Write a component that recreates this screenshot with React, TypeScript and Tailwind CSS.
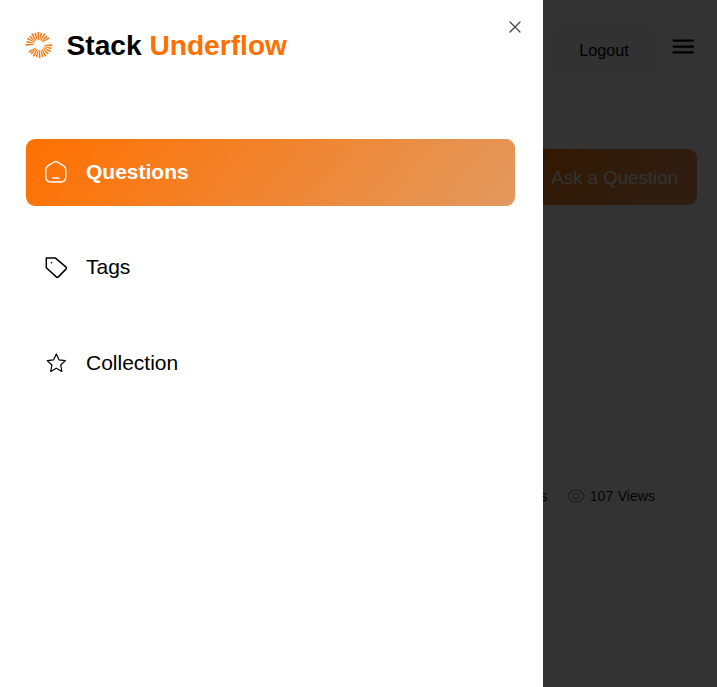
import React from "react";

const FAN_ANGLES = [0, 15, 30, 45, 60, 75, 90, 105, 120, 135, 148];

function Fan() {
  return (
    <>
      {FAN_ANGLES.map((angle, i) => (
        <path
          key={angle}
          transform={`translate(0.6 0.3) rotate(${angle})`}
          d={i % 2 ? "M5 -0.4 L11.8 -1 Q12.6 -0.1 11.9 0.9 L5 0.4Z" : "M4.6 -0.4 L12.4 -1 Q13.300 -0.1 12.5 0.9 L4.6 0.4Z"}
        />
      ))}
    </>
  );
}

function Logo() {
  return (
    <svg className="h-[28px] w-[28px] shrink-0" viewBox="-14 -14 28 28" fill="#f57a18">
      <Fan />
      <g transform="rotate(180)">
        <Fan />
      </g>
    </svg>
  );
}

function HomeIcon() {
  return (
    <svg className="h-6 w-6 shrink-0" viewBox="0 0 24 24" fill="none" stroke="currentColor" strokeWidth="1.400" strokeLinecap="round" strokeLinejoin="round">
      <path d="M10.1 2 3.900 5.800Q1.800 7.200 1.800 9.600V16.800Q1.800 22 7 22H16.600Q21.800 22 21.800 16.800V9.600Q21.800 7.200 19.700 5.800L13.500 2Q11.800 1.100 10.100 2Z" />
      <path d="M8.900 18h6" />
    </svg>
  );
}

function TagIcon() {
  return (
    <svg className="h-6 w-6 shrink-0" viewBox="0 0 24 24" fill="none" stroke="currentColor" strokeWidth="1.500" strokeLinejoin="round" strokeLinecap="round">
      <path d="M2.300 2.100H11.500L22 11.100Q22.900 12.100 22 13.100L14.300 20.900Q13.300 21.800 12.300 20.900L2.300 11.700Z" />
      <circle cx="7.500" cy="6.800" r="0.75" fill="currentColor" stroke="none" />
    </svg>
  );
}

function StarIcon() {
  return (
    <svg className="h-6 w-6 shrink-0" viewBox="0 0 24 24" fill="none" stroke="currentColor" strokeWidth="1.200" strokeLinejoin="round">
      <path d="m12.300 2.900 2.700 5.900 6.400.8-4.700 4.400 1.200 6.500-5.600-3.200-5.600 3.200 1.200-6.500-4.700-4.400 6.400-.8Z" />
    </svg>
  );
}

function EyeIcon() {
  return (
    <svg className="h-[18px] w-[18px] shrink-0" viewBox="0 0 18 18" fill="none" stroke="#858ead" strokeWidth="1.1">
      <path d="M.8 9C2.500 5.300 5.300 3.100 9 3.100S15.500 5.300 17.200 9C15.500 12.700 12.700 14.900 9 14.900S2.500 12.700.8 9Z" />
      <circle cx="9" cy="9" r="2.800" />
    </svg>
  );
}

function Backdrop() {
  return (
    <div className="flex h-full flex-col">
      <header className="flex h-[108px] shrink-0 items-start justify-end bg-[#fefefe] pr-[23px]">
        <div className="mt-[27px] flex h-[46px] w-[106px] items-center justify-center rounded-lg bg-[#f7f8fa] pl-0.5 text-[16.2px]">Logout</div>
        <svg className="mt-[38px] ml-4 h-4 w-[22px]" viewBox="0 0 22 16" stroke="#000" strokeWidth="2.100" strokeLinecap="round">
          <path d="M1.500 2.600h19.500M1.500 8.600h19.500M1.500 14.400h19.500" />
        </svg>
      </header>
      <main className="flex flex-1 flex-col px-5 pt-[41px]">
        <div className="flex h-14 w-[206px] shrink-0 items-center justify-end self-end rounded-[9px] bg-linear-[129deg] from-[#ff7000] to-[#e2995f] pt-0.5 pr-[19px] text-[18.700px] text-[#fffaf5]">
          Ask a Question
        </div>
        <article className="mt-[125px] flex h-[220px] shrink-0 flex-col justify-end rounded-xl bg-[#fefefe] pr-[42px] pb-[43px]">
          <div className="flex h-[22px] items-center justify-end text-[14.100px] text-[#151821]">
            <span className="pt-0.5">Answers</span>
            <span className="ml-[19.500px] flex items-center gap-[5px]">
              <EyeIcon />
              <span className="pt-0.5 [word-spacing:0.5px]">107 Views</span>
            </span>
          </div>
        </article>
        <article className="mt-[35px] h-[220px] shrink-0 rounded-xl bg-[#fefefe]" />
      </main>
    </div>
  );
}

const ITEM = "flex h-[67.5px] items-center gap-[18px] rounded-[9px] pl-[18.5px] text-[21px] ";

export default function App() {
  return (
    <div className="relative h-[687px] w-full overflow-hidden bg-[#fdfdfd] font-['Liberation_Sans',Arial,sans-serif] text-black">
      <Backdrop />
      <div className="absolute inset-0 bg-black/80" />
      <aside className="absolute inset-y-0 left-0 flex w-[543px] flex-col bg-white pr-[28px] pl-[25.5px]">
        <div className="mt-[31px] -ml-[0.5px] flex h-7 items-center gap-[13.500px]">
          <Logo />
          <div className="pt-0.5 text-[28.150px] leading-7 font-bold whitespace-nowrap">
            Stack <span className="text-[#ff7000]">Underflow</span>
          </div>
        </div>
        <nav className="mt-[79.500px] flex flex-col gap-7">
          <a className={ITEM + "bg-linear-[129deg] from-[#ff7000] to-[#e2995f] font-bold text-white"}>
            <HomeIcon />
            <span className="pb-0.5">Questions</span>
          </a>
          <a className={ITEM}>
            <TagIcon />
            <span className="pb-0.5">Tags</span>
          </a>
          <a className={ITEM}>
            <StarIcon />
            <span className="pb-0.5">Collection</span>
          </a>
        </nav>
        <button className="absolute top-[21px] right-[22px] h-3 w-3" aria-label="Close">
          <svg className="h-3 w-3" viewBox="0 0 12 12" stroke="#444" strokeWidth="1.250" strokeLinecap="round">
            <path d="m1 1 10 10M11 1 1 11" />
          </svg>
        </button>
      </aside>
    </div>
  );
}
